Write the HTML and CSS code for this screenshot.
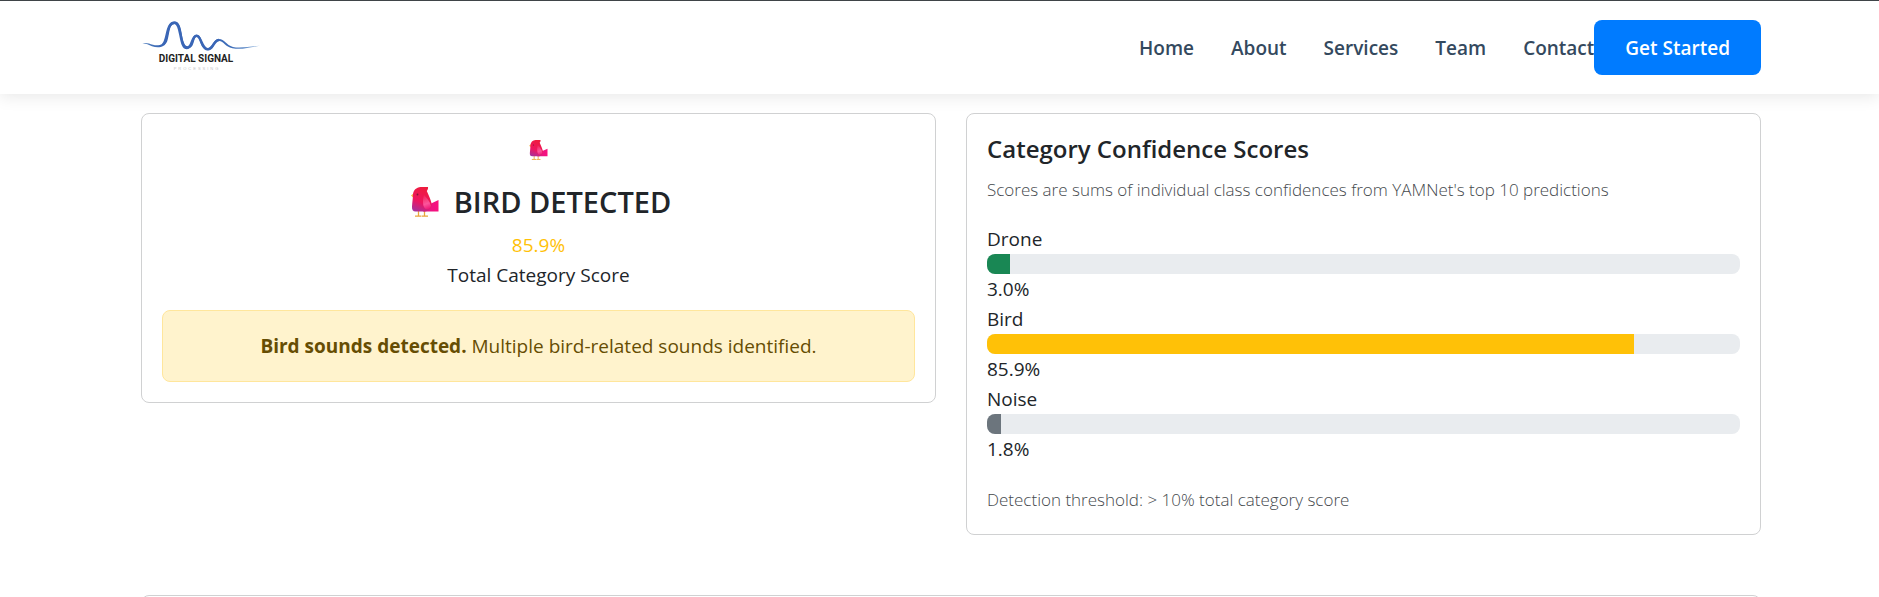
FILE: index.html
```
<!DOCTYPE html>
<html lang="en">
<head>
<meta charset="utf-8">
<title>Digital Signal Processing</title>
<link rel="stylesheet" href="styles.css">
</head>
<body>
<svg class="symbols" aria-hidden="true">
  <defs>
    <linearGradient id="plumage" x1="0.6" y1="0" x2="0.25" y2="1">
      <stop offset="0" stop-color="#ee1c3c"/>
      <stop offset="0.6" stop-color="#ee1560"/>
      <stop offset="1" stop-color="#a8309c"/>
    </linearGradient>
    <linearGradient id="tail" x1="0" y1="0" x2="1" y2="0">
      <stop offset="0" stop-color="#d91a8c"/>
      <stop offset="1" stop-color="#fb0f7c"/>
    </linearGradient>
    <linearGradient id="wing" x1="0.4" y1="0" x2="0.6" y2="1">
      <stop offset="0" stop-color="#f0285c"/>
      <stop offset="0.6" stop-color="#fb559c"/>
      <stop offset="1" stop-color="#ee1878"/>
    </linearGradient>
    <symbol id="bird" viewBox="0 0 28 30">
      <path d="M7.500 24v4.600M13.500 24v4.600M4 29.200h6.500M11 29.200h6" fill="none" stroke="#e9a53c" stroke-width="1.300"/>
      <path d="M3 6 0 8.500 2.500 11z" fill="#f4b23c"/>
      <path d="M14 18.500 19 17 27.500 13V24.500H12z" fill="url(#tail)"/>
      <path d="M2 7C3 1.500 7 0 11 0h6c.3 1.500-.2 2.800-1.200 4C17.500 8 19.500 12 20.500 16c.8 4-2 8.500-7 8.500H4.500C2 24.500.7 22.500 1 19.500 1.300 15 2 11 2 7z" fill="url(#plumage)"/>
      <path d="M13 8c3 3 6 7 6.800 10.500.5 3-2.500 4.500-5 3.500-3-1.500-3.600-8-1.800-14z" fill="url(#wing)"/>
      <circle cx="6.500" cy="7.500" r="0.900" fill="#7d1a38"/>
    </symbol>
  </defs>
</svg>

<header class="site-header">
  <a class="brand" href="#" aria-label="Digital Signal Processing">
    <svg class="logo" viewBox="0 4 120 60">
      <defs>
        <linearGradient id="wave" x1="0" y1="0" x2="1" y2="0">
          <stop offset="0" stop-color="#4f7fbd"/>
          <stop offset="0.2" stop-color="#3763b4"/>
          <stop offset="0.75" stop-color="#3c6cb8"/>
          <stop offset="1" stop-color="#8fb4dc"/>
        </linearGradient>
      </defs>
      <path d="M0.500 27.800C4 26 8 27.500 12 28.800C18 30.500 23 28 24.500 24C26 18 26 5.500 33.500 5.500C41 5.500 40 19 43 27C44.500 31 48 31.500 50 27.500C52 23 52 18.700 55.500 18.700C60.500 18.700 60 25 62.500 29C64.500 33 68 33 70.500 29.500C73 26 74 23 78 23C83.500 23 85 29 92 31C100 32.500 109 30.200 119 29.800C109 31.500 100 34 91.500 32.300C84 31 83 25 78 25C75 25 74 28 72 31.500C69 35.500 63.500 35 61 30.500C58.500 26 58.500 21 55.500 21C53.500 21 53.500 25.500 51.500 29.500C49 34 43 33.500 41 28C38.500 20 39 8 33.500 8C28 8 28.500 19 26.300 25C24 31.500 17 32.500 11 30.200C7 28.800 4 27 0.500 27.800z" fill="url(#wave)"/>
      <path d="M22 28.500C27 24 25 6.700 33.500 6.700C41 6.700 38 32 46 32C51.500 32 50.500 19.800 55.500 19.800C60.500 19.800 60.500 33.300 67 33.300C72 33.300 73 24 78 24" fill="none" stroke="#3a66b6" stroke-width="2.600"/>
      <text class="logo-name" x="55" y="46" text-anchor="middle">DIGITAL SIGNAL</text>
      <text class="logo-sub" x="56" y="54" text-anchor="middle">PROCESSING</text>
    </svg>
  </a>
  <nav class="main-nav">
    <a href="#">Home</a>
    <a href="#">About</a>
    <a href="#">Services</a>
    <a href="#">Team</a>
    <a href="#">Contact</a>
  </nav>
  <button class="cta" type="button">Get Started</button>
</header>

<main class="content">
  <div class="results">
    <section class="card summary">
      <div class="summary-icon"><svg class="bird-small"><use href="#bird"/></svg></div>
      <h2 class="summary-title"><svg class="bird-large"><use href="#bird"/></svg>BIRD DETECTED</h2>
      <div class="summary-score">85.9%</div>
      <div>Total Category Score</div>
      <div class="alert" role="alert"><strong>Bird sounds detected.</strong> Multiple bird-related sounds identified.</div>
    </section>
    <section class="card scores">
      <h3 class="scores-title">Category Confidence Scores</h3>
      <p class="note note-top">Scores are sums of individual class confidences from YAMNet's top 10 predictions</p>
      <div>Drone</div>
      <div class="progress"><div class="bar bar-drone" style="width: 3%"></div></div>
      <div>3.0%</div>
      <div>Bird</div>
      <div class="progress"><div class="bar bar-bird" style="width: 85.9%"></div></div>
      <div>85.9%</div>
      <div>Noise</div>
      <div class="progress"><div class="bar bar-noise" style="width: 1.8%"></div></div>
      <div>1.8%</div>
      <p class="note note-bottom">Detection threshold: &gt; 10% total category score</p>
    </section>
  </div>
  <section class="card next-card"></section>
</main>
</body>
</html>
```
FILE: styles.css
```
* {
  box-sizing: border-box;
}

html {
  overflow: hidden;
}

body {
  margin: 0;
  background: #fff;
  color: #212529;
  font-family: "Open Sans", "Noto Sans", sans-serif;
  font-size: 19px;
  line-height: 30px;
}

.symbols {
  position: absolute;
  width: 0;
  height: 0;
}

.site-header {
  display: flex;
  align-items: center;
  padding: 19px 118px 19px 141px;
  border-top: 1px solid #3f4448;
  background: #fff;
  box-shadow: 0 2px 16px rgba(0, 0, 0, 0.1);
}

.brand {
  display: block;
  height: 55px;
}

.logo {
  display: block;
  width: 120px;
  height: 60px;
}

.logo-name {
  fill: #222;
  font: bold 10px Roboto, "Liberation Sans", sans-serif;
}

.logo-sub {
  fill: #c4c4c8;
  font: 4px "Liberation Sans", sans-serif;
  letter-spacing: 2px;
}

.main-nav {
  display: flex;
  gap: 37px;
  margin-left: auto;
}

.main-nav a {
  color: #34495e;
  font-weight: 600;
  text-decoration: none;
}

.cta {
  height: 55px;
  padding: 0 31px;
  border: 0;
  border-radius: 8px;
  background: #007bff;
  color: #fff;
  font: inherit;
  font-weight: 600;
}

.content {
  padding: 19px 118px 0 141px;
}

.results {
  display: grid;
  grid-template-columns: 1fr 1fr;
  align-items: start;
  gap: 30px;
}

.card {
  padding: 20px;
  border: 1px solid #d0d1d2;
  border-radius: 8px;
  background: #fff;
}

.summary {
  text-align: center;
}

.summary-icon {
  display: flex;
  align-items: flex-end;
  justify-content: center;
  height: 26px;
  margin-bottom: 24px;
}

.bird-small {
  width: 19px;
  height: 20px;
}

.bird-large {
  width: 28px;
  height: 30px;
}

.summary-title {
  display: flex;
  align-items: center;
  justify-content: center;
  gap: 15px;
  margin: 0 0 10px;
  padding-left: 5px;
  font-size: 29px;
  font-weight: 600;
  line-height: 36px;
}

.summary-score {
  color: #ffc107;
}

.alert {
  margin-top: 20px;
  padding: 20px;
  border: 1px solid #ffe69c;
  border-radius: 8px;
  background: #fff3cd;
  color: #664d03;
}

.scores-title {
  margin: 0 0 10px;
  font-size: 24px;
  font-weight: 600;
  line-height: 30px;
}

.note {
  margin: 0;
  color: #45494d;
  font-size: 17px;
  font-weight: 300;
  line-height: 32px;
}

.note-top {
  margin-bottom: 18px;
}

.note-bottom {
  margin-top: 20px;
  margin-bottom: -2px;
}

.progress {
  height: 20px;
  overflow: hidden;
  border-radius: 8px;
  background: #e9ecef;
}

.bar {
  height: 100%;
}

.bar-drone {
  background: #198754;
}

.bar-bird {
  background: #ffc107;
}

.bar-noise {
  background: #6c757d;
}

.next-card {
  min-height: 200px;
  margin-top: 60px;
}
```
